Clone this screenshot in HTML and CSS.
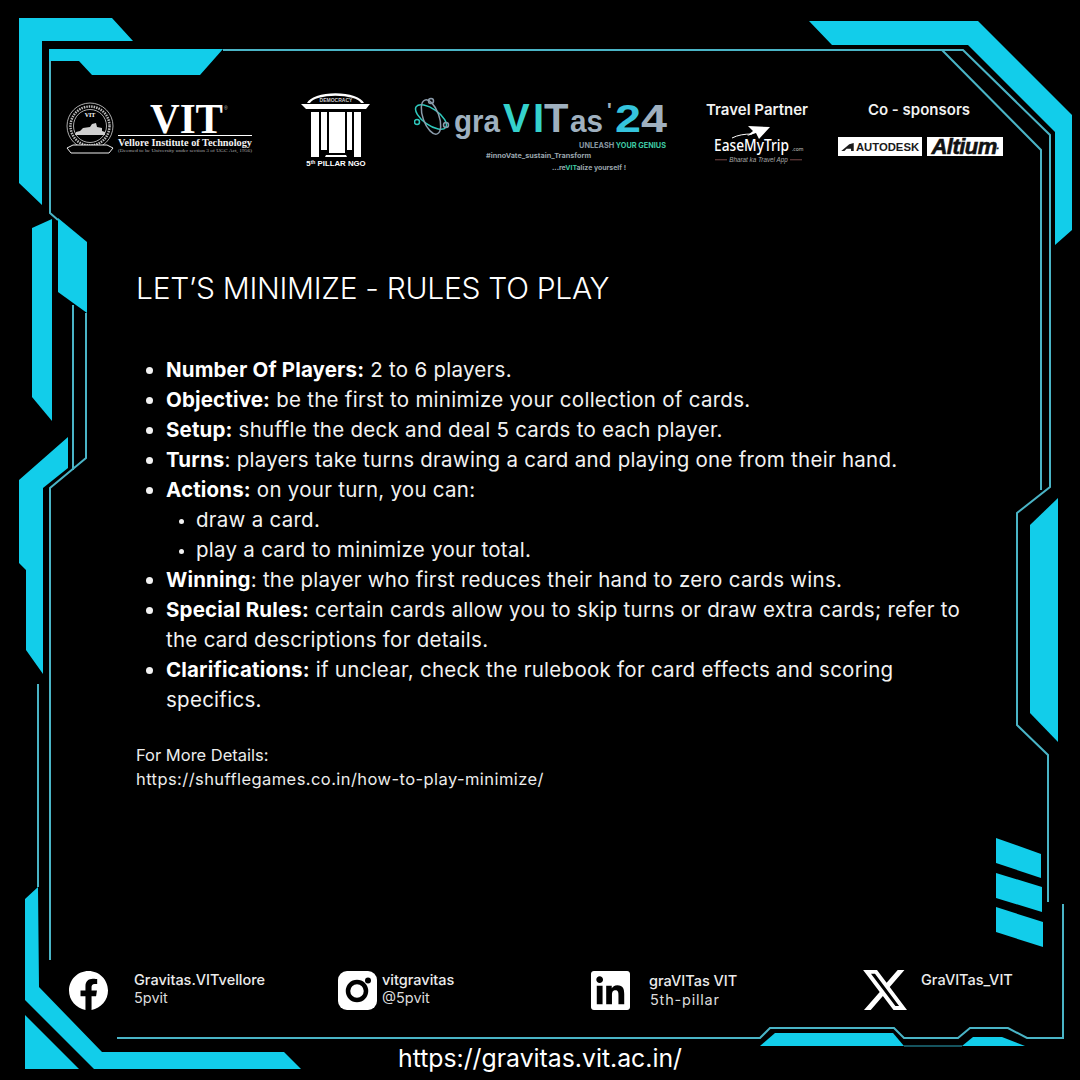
FILE: index.html
```html
<!DOCTYPE html>
<html lang="en">
<head>
<meta charset="utf-8">
<title>Let's Minimize - Rules to Play</title>
<link rel="stylesheet" href="styles.css">
</head>
<body>
<div class="page">
  <svg class="frame" viewBox="0 0 1080 1080" aria-hidden="true">
    <g class="fill">
      <polygon points="19,18 112,18 133,41 42,41 42,205 19,183"/>
      <polygon points="49,49 223,49 200,75 92,75 79,61 49,61"/>
      <polygon points="58,218 87,242 87,313 58,292"/>
      <polygon points="32,228 52,219 52,421 32,397"/>
      <polygon points="68,437 19,480 19,563 26,570 26,650 43,674 43,488 68,468"/>
      <polygon points="38,887 25,899 25,1000 94,1069 301,1069 284,1052 102,1052 39,987"/>
      <polygon points="25,1015 79,1069 25,1069"/>
      <polygon points="809,21 978,21 1072,115 1072,230 1055,245 1055,132 968,45 832,45"/>
      <polygon points="1030,525 1058,498 1058,742 1030,713"/>
      <polygon points="996,838 1041,854 1041,878 996,863"/>
      <polygon points="996,873 1042,887 1042,912 996,898"/>
      <polygon points="996,907 1043,922 1043,947 996,932"/>
      <polygon points="760,1046 775,1033 893,1033 904,1046"/>
      <polygon points="962,1046 973,1037 1002,1037 1025,1046"/>
    </g>
    <g class="line">
      <polyline points="223,50 963,50 1050,135 1050,487 1017,513 1017,725 1048,755 1048,902"/>
      <polyline points="942,50 1041,150 1041,490"/>
      <polyline points="50,61 50,213 58,220"/>
      <polyline points="73,305 73,470"/>
      <polyline points="86,313 86,458 50,488 50,960"/>
      <polyline points="38,684 38,887"/>
      <polyline points="117,1038 760,1038 770,1028 894,1028 904,1038 958,1038 970,1028 1008,1028 1027,1038 1063,1038 1063,904"/>
      <polyline class="thin" points="904,1046 962,1046"/>
    </g>
  </svg>

  <header class="sponsors">
    <svg class="logo" viewBox="66 93 190 80" role="img" aria-label="VIT">
      <g class="seal">
        <circle cx="90" cy="126" r="23"/>
        <circle cx="90" cy="126" r="19.5" class="dash"/>
        <circle cx="90" cy="126" r="16.500"/>
      </g>
      <text x="90" y="117" class="seal-text">VIT</text>
      <path class="building" d="M75 135h30v-3l-3-1v-3l-5-1-1-4-4 1-2 3-7 1-3 3-4 1z"/>
      <path class="ribbon" d="M67 148l6-3 34 0 6 3-4 5-38 0z"/>
      <text x="150" y="133" class="vit-big" textLength="73" lengthAdjust="spacingAndGlyphs">VIT</text>
      <text x="224" y="110" class="vit-reg">®</text>
      <rect x="118" y="135" width="134" height="1" class="solid"/>
      <text x="118" y="146" class="vit-name" textLength="134" lengthAdjust="spacingAndGlyphs">Vellore Institute of Technology</text>
      <text x="118" y="152" class="vit-sub" textLength="134" lengthAdjust="spacingAndGlyphs">(Deemed to be University under section 3 of UGC Act, 1956)</text>
    </svg>

    <svg class="logo" viewBox="300 93 72 80" role="img" aria-label="5th Pillar NGO">
      <path class="solid" d="M307 103a29 12 0 0 1 57 0h-3a26 9 0 0 0-51 0z"/>
      <text x="336" y="102" class="dem">DEMOCRACY</text>
      <polygon class="solid" points="301,104 370,104 366,109 306,109"/>
      <rect class="solid" x="311" y="112" width="8" height="45"/>
      <rect class="solid" x="321" y="112" width="6" height="38"/>
      <rect class="solid" x="329" y="112" width="16" height="41"/>
      <rect class="solid" x="347" y="112" width="5" height="38"/>
      <rect class="solid" x="354" y="112" width="7" height="45"/>
      <path class="solid" d="M326 155h20l1 2h-22z"/>
      <text x="336" y="166" class="pillar">5<tspan class="sup" dy="-2">th</tspan><tspan dy="2"> PILLAR NGO</tspan></text>
    </svg>

    <svg class="logo logo-wide" viewBox="414 93 262 80" role="img" aria-label="graVITas'24">
      <g class="atom">
        <ellipse cx="431" cy="117" rx="18" ry="8" transform="rotate(35 431 117)"/>
        <ellipse cx="431" cy="117" rx="8" ry="18" transform="rotate(-20 431 117)" class="atom-grey"/>
        <circle cx="431" cy="101" r="2.500" class="atom-grey"/>
        <circle cx="417" cy="122" r="2.500"/>
        <circle cx="446" cy="125" r="2.500" class="atom-grey"/>
      </g>
      <text x="454" y="132" class="gv gv-grey" textLength="46" lengthAdjust="spacingAndGlyphs">gra</text>
      <text x="503 533 544" y="132" class="gv-tall">VI<tspan class="gv-grey">T</tspan></text>
      <text x="570" y="132" class="gv gv-grey" textLength="33" lengthAdjust="spacingAndGlyphs">as</text>
      <text x="607" y="117" class="gv-tick">'</text>
      <text x="615" y="132" class="gv-num" textLength="52" lengthAdjust="spacingAndGlyphs">2<tspan class="gv-grey">4</tspan></text>
      <text x="666" y="148" class="tag tag-grey">UNLEASH <tspan class="tag-teal">YOUR GENIUS</tspan></text>
      <text x="486" y="158" class="tag2" textLength="105" lengthAdjust="spacingAndGlyphs">#innoVate_sustain_Transform</text>
      <text x="552" y="170" class="tag2" textLength="74" lengthAdjust="spacingAndGlyphs">...re<tspan class="tag-teal">VIT</tspan>alize yourself !</text>
    </svg>

    <div class="partner">
      <h2 class="partner-title">Travel Partner</h2>
      <svg class="emt" viewBox="706 124 102 42" role="img" aria-label="EaseMyTrip">
        <path class="solid" d="M748 126l22 1-11 12-3-6-9 3 6-5z"/>
        <path class="hair" d="M732 138c6-3 12-4 20-4"/>
        <text x="714" y="151" class="emt-name" textLength="75" lengthAdjust="spacingAndGlyphs">EaseMyTrip</text>
        <text x="792" y="151" class="emt-com">.com</text>
        <rect x="715" y="159.500" width="12" height="0.700" class="red"/>
        <rect x="790" y="159.500" width="12" height="0.700" class="red"/>
        <text x="758.500" y="162" class="emt-sub">Bharat ka Travel App</text>
      </svg>
    </div>

    <div class="partner partner-co">
      <h2 class="partner-title">Co - sponsors</h2>
      <div class="badges">
        <div class="badge badge-ad">
          <svg class="ad-mark" viewBox="0 0 14 9" aria-hidden="true"><path d="M0 9L9 1.500 14 0v9h-3V6.500H6L3.500 9z"/></svg>
          <span>AUTODESK</span>
        </div>
        <div class="badge badge-al">Altium<small>.</small></div>
      </div>
    </div>
  </header>

  <main class="content">
    <h1 class="title">LET’S MINIMIZE - RULES TO PLAY</h1>
    <ul class="rules">
      <li><b>Number Of Players:</b> 2 to 6 players.</li>
      <li><b>Objective:</b> be the first to minimize your collection of cards.</li>
      <li><b>Setup:</b> shuffle the deck and deal 5 cards to each player.</li>
      <li><b>Turns</b>: players take turns drawing a card and playing one from their hand.</li>
      <li><b>Actions:</b> on your turn, you can:
        <ul>
          <li>draw a card.</li>
          <li>play a card to minimize your total.</li>
        </ul>
      </li>
      <li><b>Winning</b>: the player who first reduces their hand to zero cards wins.</li>
      <li><b>Special Rules:</b> certain cards allow you to skip turns or draw extra cards; refer to the card descriptions for details.</li>
      <li><b>Clarifications:</b> if unclear, check the rulebook for card effects and scoring specifics.</li>
    </ul>
    <p class="details">For More Details:<br><span class="details-url">https://shufflegames.co.in/how-to-play-minimize/</span></p>
  </main>

  <footer class="foot">
    <div class="socials">
      <div class="social">
        <svg class="ico" viewBox="0 0 24 24" aria-label="Facebook"><path fill-rule="evenodd" d="M24 12.073c0-6.627-5.373-12-12-12s-12 5.373-12 12c0 5.990 4.388 10.954 10.125 11.854v-8.385H7.078v-3.470h3.047V9.430c0-3.007 1.792-4.669 4.533-4.669 1.312 0 2.686.235 2.686.235v2.953H15.830c-1.491 0-1.956.925-1.956 1.874v2.250h3.328l-.532 3.470h-2.796v8.385C19.612 23.027 24 18.062 24 12.073z"/></svg>
        <div class="handles handles-fb"><span>Gravitas.VITvellore</span><span>5pvit</span></div>
      </div>
      <div class="social">
        <svg class="ico" viewBox="0 0 39 39" aria-label="Instagram"><rect width="39" height="39" rx="9"/><circle class="ig-ring" cx="19" cy="20" r="9"/><circle class="ig-dot" cx="30" cy="9.500" r="3"/></svg>
        <div class="handles handles-ig"><span>vitgravitas</span><span>@5pvit</span></div>
      </div>
      <div class="social">
        <svg class="ico" viewBox="0 0 24 24" aria-label="LinkedIn"><path d="M20.447 20.452h-3.554v-5.569c0-1.328-.027-3.037-1.852-3.037-1.853 0-2.136 1.445-2.136 2.939v5.667H9.351V9h3.414v1.561h.046c.477-.9 1.637-1.850 3.370-1.850 3.601 0 4.267 2.370 4.267 5.455v6.286zM5.337 7.433c-1.144 0-2.063-.926-2.063-2.065 0-1.138.92-2.063 2.063-2.063 1.140 0 2.064.925 2.064 2.063 0 1.139-.925 2.065-2.064 2.065zm1.782 13.019H3.555V9h3.564v11.452zM22.225 0H1.771C.792 0 0 .774 0 1.729v20.542C0 23.227.792 24 1.771 24h20.451C23.200 24 24 23.227 24 22.271V1.729C24 .774 23.200 0 22.222 0h.003z"/></svg>
        <div class="handles handles-in"><span>graVITas VIT</span><span class="alt">5th-pillar</span></div>
      </div>
      <div class="social">
        <svg class="ico ico-x" viewBox="1.200 2.250 21.600 19.500" preserveAspectRatio="none" aria-label="X"><path d="M18.244 2.250h3.308l-7.227 8.260 8.502 11.240H16.170l-5.214-6.817L4.990 21.750H1.680l7.730-8.835L1.254 2.250H8.080l4.713 6.231zm-1.161 17.520h1.833L7.084 4.126H5.117z"/></svg>
        <div class="handles handles-x"><span>GraVITas_VIT</span></div>
      </div>
    </div>
    <a class="site">https://gravitas.vit.ac.in/</a>
  </footer>
</div>
</body>
</html>
```
FILE: styles.css
```css
* { box-sizing: border-box; }
html, body { margin: 0; padding: 0; background: #000; }
.page {
  position: relative;
  width: 1080px;
  height: 1080px;
  overflow: hidden;
  background: #000;
  color: #f4f4f4;
  font-family: Inter, "Liberation Sans", sans-serif;
  display: flex;
  flex-direction: column;
}
.frame { position: absolute; left: 0; top: 0; width: 1080px; height: 1080px; }
.fill polygon { fill: #12cdea; }
.line polyline { fill: none; stroke: #4ab4c6; stroke-width: 2; }
.line polyline.thin { stroke-width: 1.500; stroke: #1d6f7e; }

.sponsors {
  position: relative;
  display: grid;
  grid-template-columns: 234px 114px 292px 132px 180px;
  padding: 93px 0 0 66px;
  height: 173px;
  flex: none;
}
.logo { display: block; width: 190px; height: 80px; }
.logo:nth-child(2) { width: 72px; }
.logo-wide { width: 262px; }
.solid { fill: #fff; }
.seal circle { fill: none; stroke: #d8d8d8; stroke-width: 0.800; }
.seal .dash { stroke-dasharray: 1.500 1; stroke-width: 2.500; stroke: #bbb; }
.seal-text { font: 700 6px "Liberation Serif", serif; fill: #fff; text-anchor: middle; }
.building { fill: #cfcfcf; }
.ribbon { fill: #000; stroke: #eee; stroke-width: 1; }
.vit-big { font: 700 42px "Liberation Serif", serif; fill: #fff; }
.vit-reg { font: 400 5px "Liberation Sans", sans-serif; fill: #bbb; }
.vit-name { font: 700 10.500px "Liberation Serif", serif; fill: #f2f2f2; }
.vit-sub { font: 400 5px "Liberation Serif", serif; fill: #a8a8a8; }
.dem { font: 700 5px "Liberation Sans", sans-serif; fill: #ccc; text-anchor: middle; }
.pillar { font: 700 7.800px "Liberation Sans", sans-serif; fill: #fff; text-anchor: middle; }
.sup { font-size: 5px; }

.atom ellipse, .atom circle { fill: none; stroke: #2fc9bd; stroke-width: 1.500; }
.atom .atom-grey { stroke: #8b9cab; }
.gv { font: 700 32px "Liberation Sans", sans-serif; }
.gv-grey { fill: #9fb0bf; }
.gv-tall { font: 700 40px "Liberation Sans", sans-serif; fill: #35d2cc; }
.gv-tick { font: 700 20px "Liberation Sans", sans-serif; fill: #9fb0bf; }
.gv-num { font: 700 38px "Liberation Sans", sans-serif; fill: #35c4dd; }
.tag { font: 700 7.300px Inter, sans-serif; text-anchor: end; }
.tag-grey { fill: #8a98a3; }
.tag-teal { fill: #3fc9a5; }
.tag2 { font: 700 6.800px Inter, sans-serif; fill: #9aa6ae; }

.partner { display: flex; flex-direction: column; align-items: center; width: 102px; }
.partner-co { width: 162px; }
.partner-title {
  margin: 0;
  height: 34px;
  font-size: 15px;
  line-height: 34px;
  font-weight: 600;
  color: #f2f2f2;
  white-space: nowrap;
}
.emt { display: block; width: 102px; height: 42px; margin-top: -3px; flex: none; }
.emt-name { font: 500 15.500px "Noto Sans", sans-serif; fill: #fff; }
.emt-com { font: 400 5px "Noto Sans", sans-serif; fill: #ccc; }
.emt-sub { font: italic 400 6.300px "Liberation Sans", sans-serif; fill: #aaa; text-anchor: middle; }
.hair { fill: none; stroke: #fff; stroke-width: 1; }
.red { fill: #a66; }

.badges { display: flex; gap: 5px; margin-top: 10px; align-self: flex-start; }
.badge {
  height: 19px;
  background: #fff;
  color: #1a1a1a;
  display: flex;
  align-items: center;
  justify-content: center;
  white-space: nowrap;
  flex: none;
}
.badge-ad { width: 84px; gap: 2px; font-size: 11.300px; font-weight: 700; font-family: "Liberation Sans", sans-serif; }
.ad-mark { width: 13px; height: 8px; fill: #1a1a1a; }
.badge-al { width: 76px; font: italic 700 22px "Liberation Sans", sans-serif; letter-spacing: -0.500px; -webkit-text-stroke: 0.600px #111; color: #111; }
.badge-al small { font-size: 8px; }

.content { position: relative; padding-left: 136px; flex: none; }
.title {
  margin: 95px 0 47px;
  font-size: 30px;
  line-height: 40px;
  font-weight: 300;
  letter-spacing: -0.300px;
  color: #fff;
  white-space: nowrap;
}
.rules {
  margin: 0;
  padding: 0 115px 0 30px;
  list-style: disc;
  font-size: 20.500px;
  line-height: 30px;
  letter-spacing: 0.270px;
  font-weight: 400;
  color: #f2f2f2;
}
.rules ul { margin: 0; padding-left: 30px; list-style: disc; }
.rules ul li::marker { font-size: 15px; }
.rules b { font-weight: 700; color: #fff; letter-spacing: 0.150px; }
.details {
  margin: 28px 0 0;
  font-size: 16.500px;
  line-height: 24px;
  color: #ececec;
}
.details-url { letter-spacing: 0.430px; }

.foot { position: relative; margin-top: auto; flex: none; }
.socials {
  display: grid;
  grid-template-columns: 269px 253px 272px auto;
  padding-left: 69px;
  height: 40px;
}
.social { display: flex; align-items: flex-start; }
.ico { width: 39px; height: 39px; flex: none; fill: #fff; display: block; margin-top: 1px; }
.ico-x { width: 44px; height: 40px; margin-top: 0; }
.ig-ring { fill: none; stroke: #000; stroke-width: 4.500; }
.ig-dot { fill: #000; }
.handles { display: flex; flex-direction: column; font-size: 14.500px; line-height: 18px; font-weight: 500; color: #ececec; white-space: nowrap; }
.handles span + span { font-weight: 400; color: #dcdcdc; }
.handles .alt { letter-spacing: 0.800px; margin-left: 1px; }
.handles-fb { margin: 1px 0 0 26px; }
.handles-ig { margin: 1px 0 0 5px; }
.handles-in { margin: 1px 0 0 19px; line-height: 19px; }
.handles-x { margin: 1px 0 0 14px; }
.site {
  display: block;
  margin: 28px 0 2px;
  text-align: center;
  font-size: 24.800px;
  line-height: 40px;
  font-weight: 400;
  color: #fff;
}
```
